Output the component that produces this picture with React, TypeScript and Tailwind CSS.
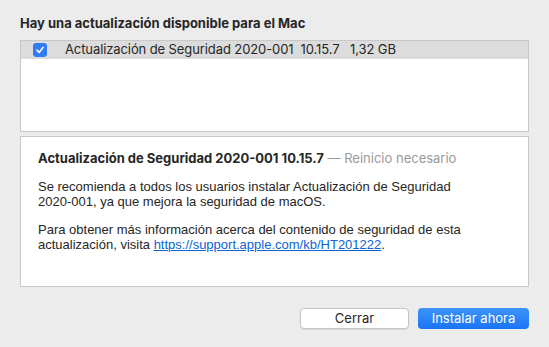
import React from "react";

export default function App() {
  return (
    <div
      className="w-[549px] h-[347px] bg-[#ececec] px-5 pt-[14px] text-[13px] text-[#262626]"
      style={{ fontFamily: "Inter, 'Liberation Sans', sans-serif" }}
    >
      <h1 className="font-bold text-[13px] leading-[18px] text-[#262626]">
        Hay una actualización disponible para el Mac
      </h1>

      {/* lista de actualizaciones */}
      <div className="mt-2 h-[92px] border border-[#c8c8c8] bg-white">
        <div className="flex items-center h-[18px] bg-[#dcdcdc]">
          <div className="ml-3 flex h-[14px] w-[14px] items-center justify-center rounded-[3px] bg-[#2f7cf6]">
            <svg width="10" height="10" viewBox="0 0 10 10" fill="none">
              <path d="M2 5.2 L4.1 7.4 L8 2.4" stroke="white" strokeWidth="1.6" strokeLinecap="round" strokeLinejoin="round" />
            </svg>
          </div>
          <span className="ml-[18px] whitespace-pre tracking-[-0.1px]">Actualización de Seguridad 2020-001  10.15.7   1,32 GB</span>
        </div>
      </div>

      {/* detalle */}
      <div className="mt-[4px] h-[151px] border border-[#c8c8c8] bg-white px-[17px] pt-[14px] leading-[15px]">
        <p>
          <span className="font-bold">Actualización de Seguridad 2020-001 10.15.7</span>
          <span className="text-[#9a9a9a]"> — Reinicio necesario</span>
        </p>
        <div className="font-['Liberation_Sans',sans-serif]">
          <p className="mt-[13px]">
            Se recomienda a todos los usuarios instalar Actualización de Seguridad
            <br />
            2020-001, ya que mejora la seguridad de macOS.
          </p>
          <p className="mt-[13px]">
            Para obtener más información acerca del contenido de seguridad de esta
            <br />
            actualización, visita{" "}
            <a className="text-[#0b63d6] underline">https://support.apple.com/kb/HT201222</a>.
          </p>
        </div>
      </div>

      <div className="mt-[21px] flex justify-end gap-[9px]">
        <button className="h-[21px] w-[109px] rounded-[4px] border border-[#c4c4c4] bg-white text-[13px] text-[#262626] shadow-[0_1px_1px_rgba(0,0,0,0.08)]">
          Cerrar
        </button>
        <button className="h-[21px] w-[111px] rounded-[4px] bg-gradient-to-b from-[#3c93fb] to-[#1a74f5] text-[13px] text-white">
          Instalar ahora
        </button>
      </div>
    </div>
  );
}
